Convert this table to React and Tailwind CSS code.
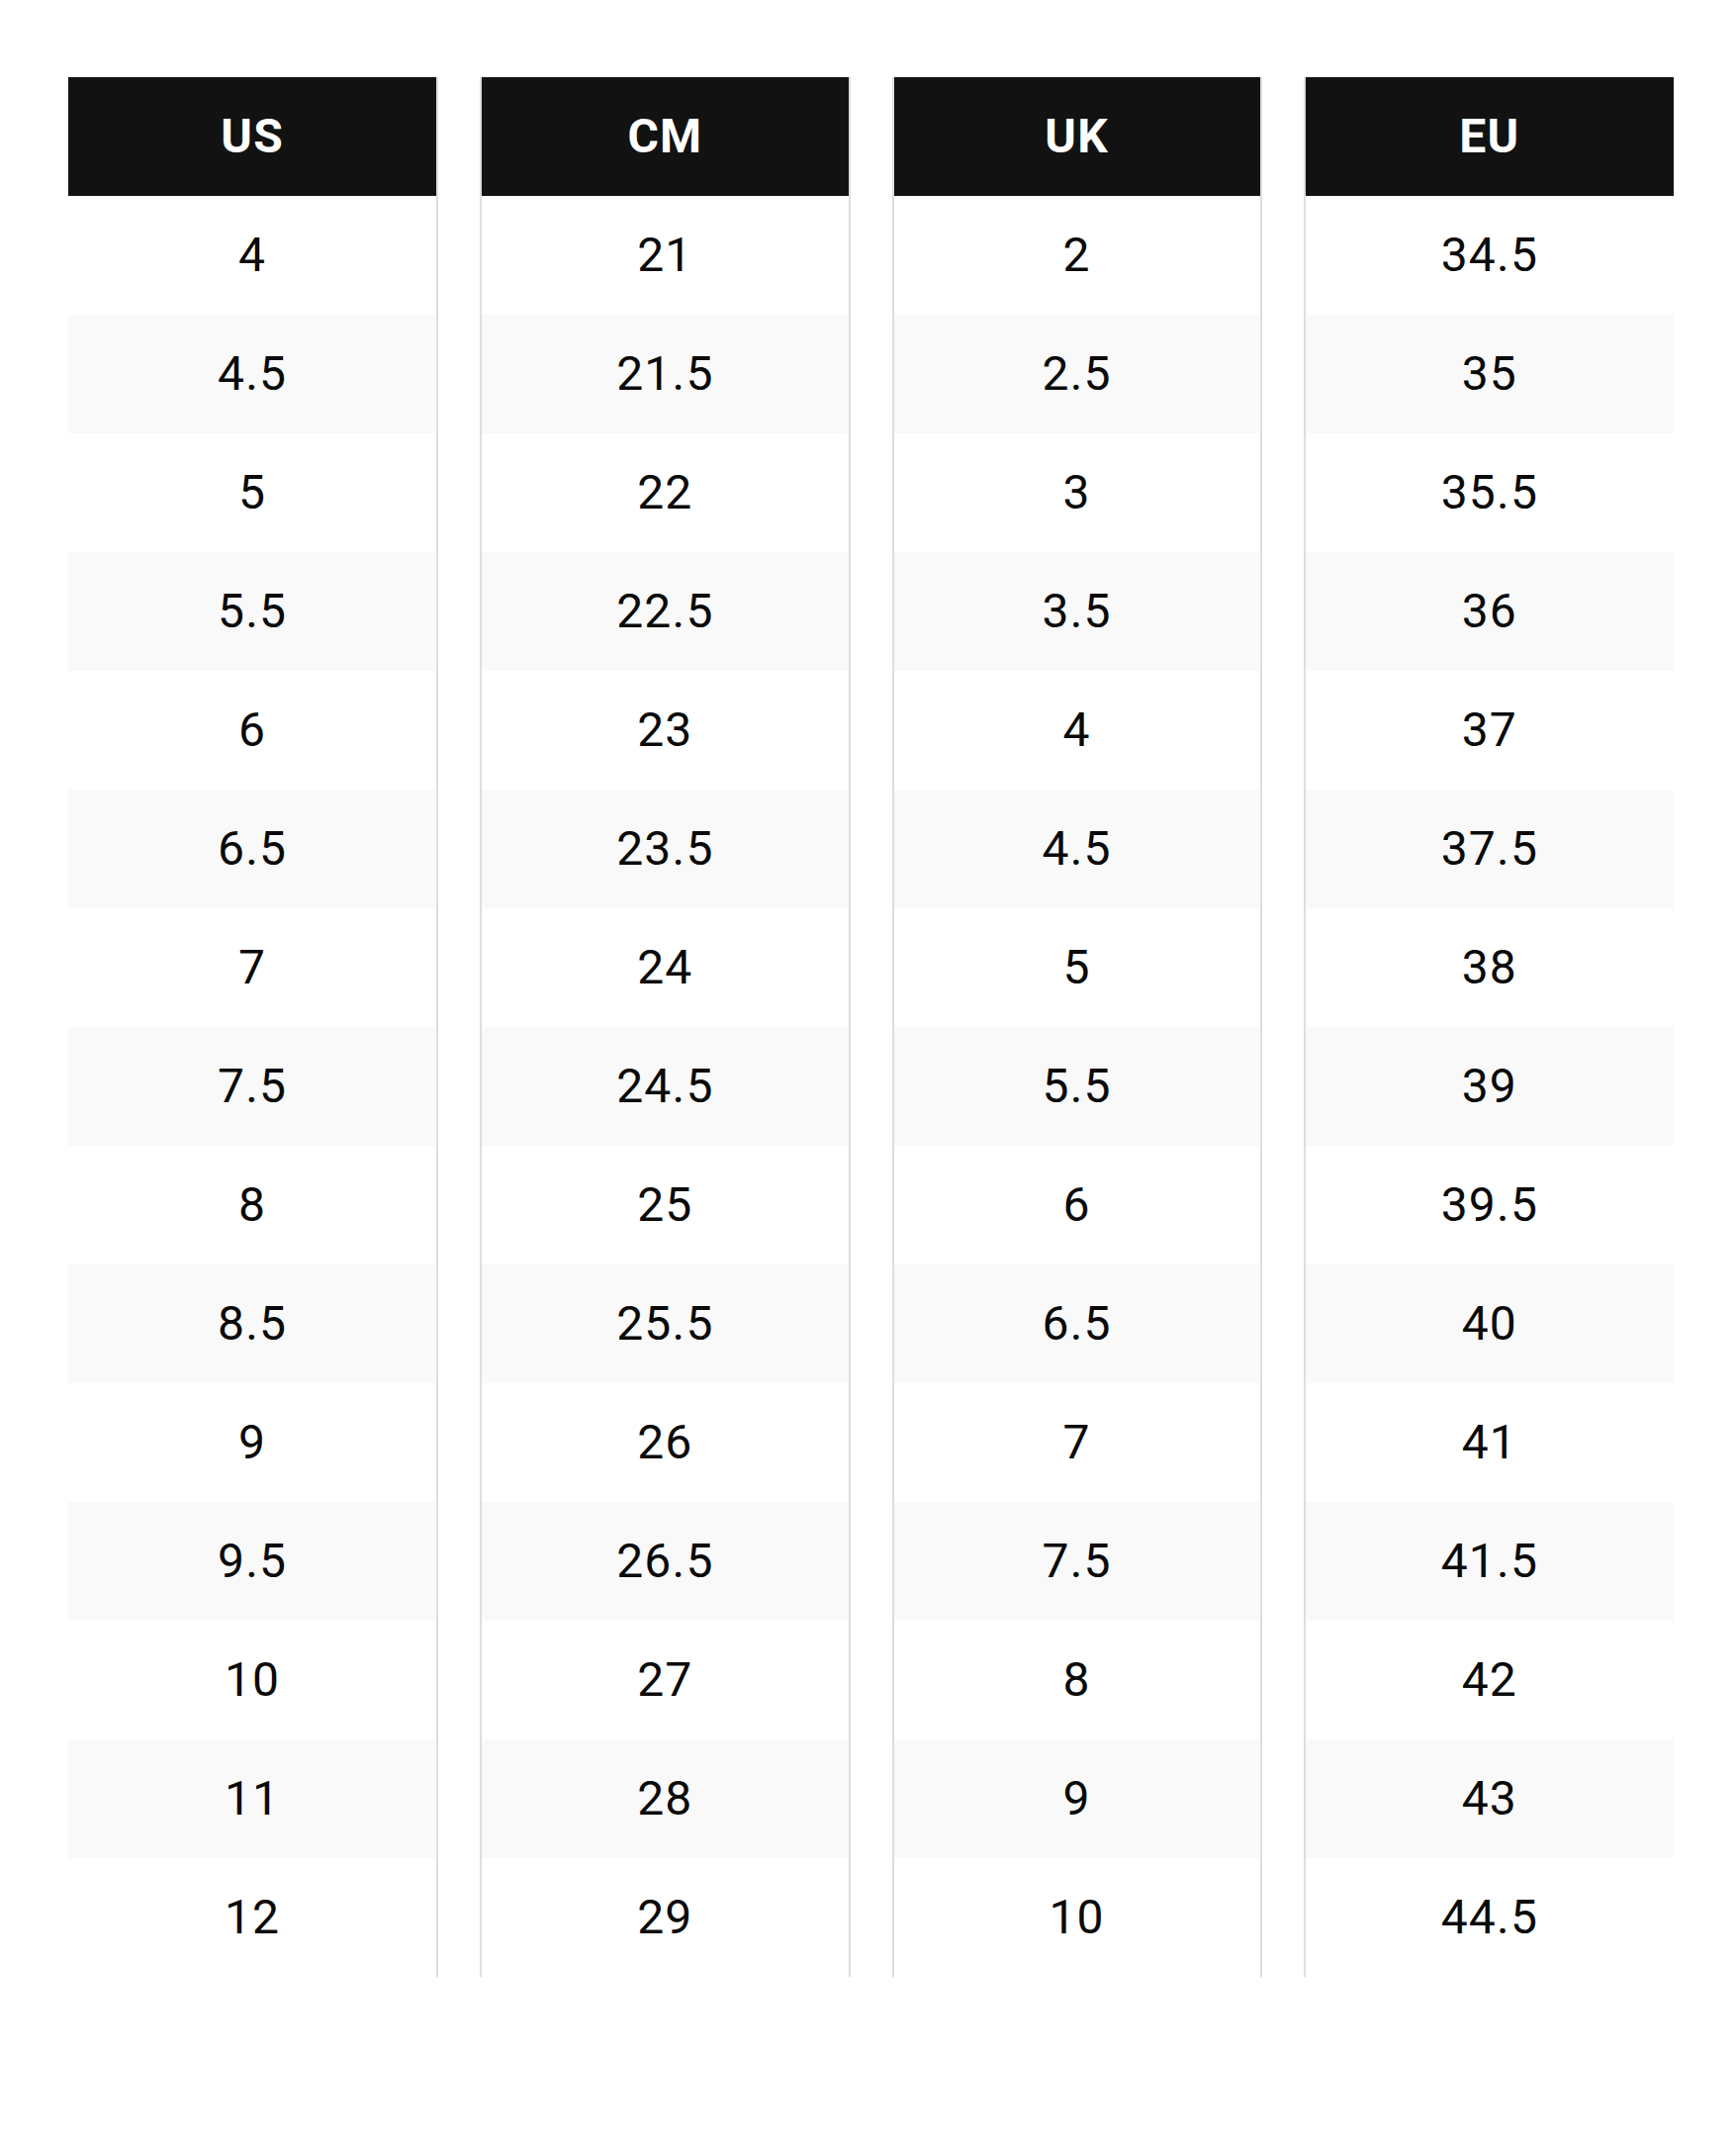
const columns = [
  { label: 'US', border: 'border-r-2', sizes: ['4', '4.5', '5', '5.5', '6', '6.5', '7', '7.5', '8', '8.5', '9', '9.5', '10', '11', '12'] },
  { label: 'CM', border: 'border-x-2', sizes: ['21', '21.5', '22', '22.5', '23', '23.5', '24', '24.5', '25', '25.5', '26', '26.5', '27', '28', '29'] },
  { label: 'UK', border: 'border-x-2', sizes: ['2', '2.5', '3', '3.5', '4', '4.5', '5', '5.5', '6', '6.5', '7', '7.5', '8', '9', '10'] },
  { label: 'EU', border: 'border-l-2', sizes: ['34.5', '35', '35.5', '36', '37', '37.5', '38', '39', '39.5', '40', '41', '41.5', '42', '43', '44.5'] },
];

// One column of the size chart: black header, then striped rows
const SizeColumn = ({ label, border, sizes }) => (
  <div className={`flex flex-col border-[#dedede] ${border}`}>
    <div className="h-[120px] flex items-center justify-center bg-[#121212] text-white text-[48px] font-bold tracking-wide">
      {label}
    </div>
    {sizes.map((size, i) => (
      <div
        key={size}
        className={`h-[120px] flex items-center justify-center text-[48px] text-[#0a0a0a] tracking-wide ${i % 2 === 1 ? 'bg-[#f9f9f9]' : 'bg-white'}`}
      >
        {size}
      </div>
    ))}
  </div>
);

export default function App() {
  return (
    <div className="bg-white pt-[78px] pb-[177px] pl-[69px]" style={{ fontFamily: 'Roboto, "Noto Sans", sans-serif' }}>
      <div className="grid grid-cols-4 gap-[42px] w-[1623px]">
        {columns.map(col => (
          <SizeColumn key={col.label} {...col} />
        ))}
      </div>
    </div>
  );
}
